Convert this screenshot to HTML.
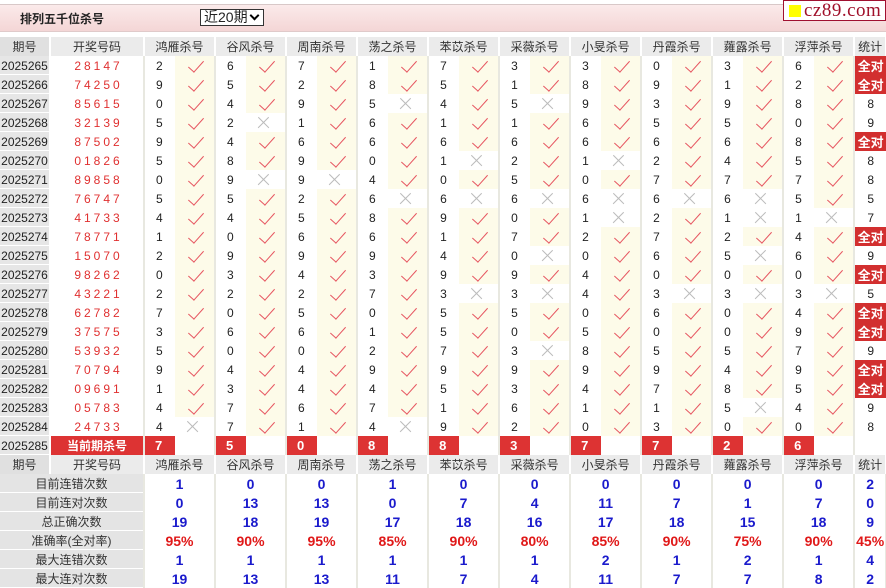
<!DOCTYPE html>
<html><head><meta charset="utf-8"><style>
*{margin:0;padding:0;box-sizing:border-box}
body{width:886px;height:586px;overflow:hidden;background:#fff;font-family:"Liberation Sans","Noto Sans CJK SC",sans-serif;font-size:12px;color:#222;position:relative}
.band{position:absolute;left:0;top:4px;width:886px;height:28px;background:linear-gradient(#fbeaea,#f4d6d6);border-top:1px solid #d8c8c8;border-bottom:1px solid #e0caca}
.title{position:absolute;left:20px;top:10px;font-weight:bold;font-size:12px;color:#222}
.sel{position:absolute;left:200px;top:9px;width:64px;height:17px;border:1px solid #333;background:#fff;font-size:14px;line-height:15px;padding-left:3px}
.sel b{position:absolute;right:5px;top:2px;width:7px;height:7px;border-right:2.5px solid #000;border-bottom:2.5px solid #000;transform:rotate(45deg)}
.logo{position:absolute;left:783px;top:0;width:103px;height:21px;border:1px solid #a01030;background:#fff;font-family:"Liberation Serif",serif;font-size:19px;line-height:19px;color:#a0102a;padding-left:20px;letter-spacing:0.5px}
.logo i{position:absolute;left:5px;top:4px;width:12px;height:12px;background:#ff0}
table{position:absolute;left:0;top:37px;border-collapse:collapse;table-layout:fixed;width:886px}
td{height:19px;padding:0;white-space:nowrap;overflow:hidden}
td.p{background:linear-gradient(#e6e6e6 18px,#fff 18px);text-align:center;border-right:2px solid #fff}
td.k{color:#e03030;letter-spacing:3px;text-align:center;padding-left:3px;border-right:2px solid #e8e8e0}
td.n{padding-left:11px}
td.y,td.w{border-right:2px solid #e8e8e0;position:relative}
td.y{background:#fdfbe9}
td.y:after{content:"";position:absolute;left:17px;top:1px;width:7px;height:14px;border-right:1.6px solid #e65560;border-bottom:1.6px solid #e65560;transform:rotate(42deg)}
td.w:before,td.w:after{content:"";position:absolute;left:10px;top:9px;width:15px;height:1.3px;background:#bbb;transform:rotate(45deg)}
td.w:after{transform:rotate(-45deg)}
td.s{text-align:center}
td.q{text-align:center;background:#d22f2f;color:#fff;font-weight:bold;font-size:13px}
tr.h td{background:#ebebeb;text-align:center;color:#333;border-right:2px solid #fff}
tr.h td.p{background:#e0e0e0}
tr.x td.r{background:#d33;color:#fff;font-weight:bold;font-size:13px;padding-left:10px}
tr.x td.kk{background:#d33;color:#fff;font-weight:bold;text-align:center;border-right:2px solid #e8e8e0}
tr.x td.e{border-right:2px solid #e8e8e0}
tr.t td{text-align:center;font-weight:bold;font-size:14px;color:#1a1acc;border-right:2px solid #e8e8e0}
tr.t td.L{background:linear-gradient(#e4e4e4 18px,#fff 18px);font-weight:normal;font-size:12px;color:#333}
tr.t.pc td{color:#e01818}
tr.t.pc td.L{color:#333}
</style></head><body>
<div class="band"></div>
<div class="title">排列五千位杀号</div>
<div class="sel">近20期<b></b></div>
<div class="logo"><i></i>cz89.com</div>
<table>
<colgroup><col style="width:50px"><col style="width:94px">
<col style="width:31px"><col style="width:40px"><col style="width:31px"><col style="width:40px"><col style="width:31px"><col style="width:40px"><col style="width:31px"><col style="width:40px"><col style="width:31px"><col style="width:40px"><col style="width:31px"><col style="width:40px"><col style="width:31px"><col style="width:40px"><col style="width:31px"><col style="width:40px"><col style="width:31px"><col style="width:40px"><col style="width:31px"><col style="width:40px"><col style="width:32px"></colgroup>
<tr class="h"><td class="p">期号</td><td>开奖号码</td><td colspan="2">鸿雁杀号</td><td colspan="2">谷风杀号</td><td colspan="2">周南杀号</td><td colspan="2">荡之杀号</td><td colspan="2">苯苡杀号</td><td colspan="2">采薇杀号</td><td colspan="2">小旻杀号</td><td colspan="2">丹霞杀号</td><td colspan="2">蕹露杀号</td><td colspan="2">浮萍杀号</td><td>统计</td></tr>
<tr><td class="p">2025265</td><td class="k">28147</td><td class="n">2</td><td class="y"></td><td class="n">6</td><td class="y"></td><td class="n">7</td><td class="y"></td><td class="n">1</td><td class="y"></td><td class="n">7</td><td class="y"></td><td class="n">3</td><td class="y"></td><td class="n">3</td><td class="y"></td><td class="n">0</td><td class="y"></td><td class="n">3</td><td class="y"></td><td class="n">6</td><td class="y"></td><td class="q">全对</td></tr>
<tr><td class="p">2025266</td><td class="k">74250</td><td class="n">9</td><td class="y"></td><td class="n">5</td><td class="y"></td><td class="n">2</td><td class="y"></td><td class="n">8</td><td class="y"></td><td class="n">5</td><td class="y"></td><td class="n">1</td><td class="y"></td><td class="n">8</td><td class="y"></td><td class="n">9</td><td class="y"></td><td class="n">1</td><td class="y"></td><td class="n">2</td><td class="y"></td><td class="q">全对</td></tr>
<tr><td class="p">2025267</td><td class="k">85615</td><td class="n">0</td><td class="y"></td><td class="n">4</td><td class="y"></td><td class="n">9</td><td class="y"></td><td class="n">5</td><td class="w"></td><td class="n">4</td><td class="y"></td><td class="n">5</td><td class="w"></td><td class="n">9</td><td class="y"></td><td class="n">3</td><td class="y"></td><td class="n">9</td><td class="y"></td><td class="n">8</td><td class="y"></td><td class="s">8</td></tr>
<tr><td class="p">2025268</td><td class="k">32139</td><td class="n">5</td><td class="y"></td><td class="n">2</td><td class="w"></td><td class="n">1</td><td class="y"></td><td class="n">6</td><td class="y"></td><td class="n">1</td><td class="y"></td><td class="n">1</td><td class="y"></td><td class="n">6</td><td class="y"></td><td class="n">5</td><td class="y"></td><td class="n">5</td><td class="y"></td><td class="n">0</td><td class="y"></td><td class="s">9</td></tr>
<tr><td class="p">2025269</td><td class="k">87502</td><td class="n">9</td><td class="y"></td><td class="n">4</td><td class="y"></td><td class="n">6</td><td class="y"></td><td class="n">6</td><td class="y"></td><td class="n">6</td><td class="y"></td><td class="n">6</td><td class="y"></td><td class="n">6</td><td class="y"></td><td class="n">6</td><td class="y"></td><td class="n">6</td><td class="y"></td><td class="n">8</td><td class="y"></td><td class="q">全对</td></tr>
<tr><td class="p">2025270</td><td class="k">01826</td><td class="n">5</td><td class="y"></td><td class="n">8</td><td class="y"></td><td class="n">9</td><td class="y"></td><td class="n">0</td><td class="y"></td><td class="n">1</td><td class="w"></td><td class="n">2</td><td class="y"></td><td class="n">1</td><td class="w"></td><td class="n">2</td><td class="y"></td><td class="n">4</td><td class="y"></td><td class="n">5</td><td class="y"></td><td class="s">8</td></tr>
<tr><td class="p">2025271</td><td class="k">89858</td><td class="n">0</td><td class="y"></td><td class="n">9</td><td class="w"></td><td class="n">9</td><td class="w"></td><td class="n">4</td><td class="y"></td><td class="n">0</td><td class="y"></td><td class="n">5</td><td class="y"></td><td class="n">0</td><td class="y"></td><td class="n">7</td><td class="y"></td><td class="n">7</td><td class="y"></td><td class="n">7</td><td class="y"></td><td class="s">8</td></tr>
<tr><td class="p">2025272</td><td class="k">76747</td><td class="n">5</td><td class="y"></td><td class="n">5</td><td class="y"></td><td class="n">2</td><td class="y"></td><td class="n">6</td><td class="w"></td><td class="n">6</td><td class="w"></td><td class="n">6</td><td class="w"></td><td class="n">6</td><td class="w"></td><td class="n">6</td><td class="w"></td><td class="n">6</td><td class="w"></td><td class="n">5</td><td class="y"></td><td class="s">5</td></tr>
<tr><td class="p">2025273</td><td class="k">41733</td><td class="n">4</td><td class="y"></td><td class="n">4</td><td class="y"></td><td class="n">5</td><td class="y"></td><td class="n">8</td><td class="y"></td><td class="n">9</td><td class="y"></td><td class="n">0</td><td class="y"></td><td class="n">1</td><td class="w"></td><td class="n">2</td><td class="y"></td><td class="n">1</td><td class="w"></td><td class="n">1</td><td class="w"></td><td class="s">7</td></tr>
<tr><td class="p">2025274</td><td class="k">78771</td><td class="n">1</td><td class="y"></td><td class="n">0</td><td class="y"></td><td class="n">6</td><td class="y"></td><td class="n">6</td><td class="y"></td><td class="n">1</td><td class="y"></td><td class="n">7</td><td class="y"></td><td class="n">2</td><td class="y"></td><td class="n">7</td><td class="y"></td><td class="n">2</td><td class="y"></td><td class="n">4</td><td class="y"></td><td class="q">全对</td></tr>
<tr><td class="p">2025275</td><td class="k">15070</td><td class="n">2</td><td class="y"></td><td class="n">9</td><td class="y"></td><td class="n">9</td><td class="y"></td><td class="n">9</td><td class="y"></td><td class="n">4</td><td class="y"></td><td class="n">0</td><td class="w"></td><td class="n">0</td><td class="y"></td><td class="n">6</td><td class="y"></td><td class="n">5</td><td class="w"></td><td class="n">6</td><td class="y"></td><td class="s">9</td></tr>
<tr><td class="p">2025276</td><td class="k">98262</td><td class="n">0</td><td class="y"></td><td class="n">3</td><td class="y"></td><td class="n">4</td><td class="y"></td><td class="n">3</td><td class="y"></td><td class="n">9</td><td class="y"></td><td class="n">9</td><td class="y"></td><td class="n">4</td><td class="y"></td><td class="n">0</td><td class="y"></td><td class="n">0</td><td class="y"></td><td class="n">0</td><td class="y"></td><td class="q">全对</td></tr>
<tr><td class="p">2025277</td><td class="k">43221</td><td class="n">2</td><td class="y"></td><td class="n">2</td><td class="y"></td><td class="n">2</td><td class="y"></td><td class="n">7</td><td class="y"></td><td class="n">3</td><td class="w"></td><td class="n">3</td><td class="w"></td><td class="n">4</td><td class="y"></td><td class="n">3</td><td class="w"></td><td class="n">3</td><td class="w"></td><td class="n">3</td><td class="w"></td><td class="s">5</td></tr>
<tr><td class="p">2025278</td><td class="k">62782</td><td class="n">7</td><td class="y"></td><td class="n">0</td><td class="y"></td><td class="n">5</td><td class="y"></td><td class="n">0</td><td class="y"></td><td class="n">5</td><td class="y"></td><td class="n">5</td><td class="y"></td><td class="n">0</td><td class="y"></td><td class="n">6</td><td class="y"></td><td class="n">0</td><td class="y"></td><td class="n">4</td><td class="y"></td><td class="q">全对</td></tr>
<tr><td class="p">2025279</td><td class="k">37575</td><td class="n">3</td><td class="y"></td><td class="n">6</td><td class="y"></td><td class="n">6</td><td class="y"></td><td class="n">1</td><td class="y"></td><td class="n">5</td><td class="y"></td><td class="n">0</td><td class="y"></td><td class="n">5</td><td class="y"></td><td class="n">0</td><td class="y"></td><td class="n">0</td><td class="y"></td><td class="n">9</td><td class="y"></td><td class="q">全对</td></tr>
<tr><td class="p">2025280</td><td class="k">53932</td><td class="n">5</td><td class="y"></td><td class="n">0</td><td class="y"></td><td class="n">0</td><td class="y"></td><td class="n">2</td><td class="y"></td><td class="n">7</td><td class="y"></td><td class="n">3</td><td class="w"></td><td class="n">8</td><td class="y"></td><td class="n">5</td><td class="y"></td><td class="n">5</td><td class="y"></td><td class="n">7</td><td class="y"></td><td class="s">9</td></tr>
<tr><td class="p">2025281</td><td class="k">70794</td><td class="n">9</td><td class="y"></td><td class="n">4</td><td class="y"></td><td class="n">4</td><td class="y"></td><td class="n">9</td><td class="y"></td><td class="n">9</td><td class="y"></td><td class="n">9</td><td class="y"></td><td class="n">9</td><td class="y"></td><td class="n">9</td><td class="y"></td><td class="n">4</td><td class="y"></td><td class="n">9</td><td class="y"></td><td class="q">全对</td></tr>
<tr><td class="p">2025282</td><td class="k">09691</td><td class="n">1</td><td class="y"></td><td class="n">3</td><td class="y"></td><td class="n">4</td><td class="y"></td><td class="n">4</td><td class="y"></td><td class="n">5</td><td class="y"></td><td class="n">3</td><td class="y"></td><td class="n">4</td><td class="y"></td><td class="n">7</td><td class="y"></td><td class="n">8</td><td class="y"></td><td class="n">5</td><td class="y"></td><td class="q">全对</td></tr>
<tr><td class="p">2025283</td><td class="k">05783</td><td class="n">4</td><td class="y"></td><td class="n">7</td><td class="y"></td><td class="n">6</td><td class="y"></td><td class="n">7</td><td class="y"></td><td class="n">1</td><td class="y"></td><td class="n">6</td><td class="y"></td><td class="n">1</td><td class="y"></td><td class="n">1</td><td class="y"></td><td class="n">5</td><td class="w"></td><td class="n">4</td><td class="y"></td><td class="s">9</td></tr>
<tr><td class="p">2025284</td><td class="k">24733</td><td class="n">4</td><td class="w"></td><td class="n">7</td><td class="y"></td><td class="n">1</td><td class="y"></td><td class="n">4</td><td class="w"></td><td class="n">9</td><td class="y"></td><td class="n">2</td><td class="y"></td><td class="n">0</td><td class="y"></td><td class="n">3</td><td class="y"></td><td class="n">0</td><td class="y"></td><td class="n">0</td><td class="y"></td><td class="s">8</td></tr>
<tr class="x"><td class="p">2025285</td><td class="kk">当前期杀号</td><td class="r">7</td><td class="e"></td><td class="r">5</td><td class="e"></td><td class="r">0</td><td class="e"></td><td class="r">8</td><td class="e"></td><td class="r">8</td><td class="e"></td><td class="r">3</td><td class="e"></td><td class="r">7</td><td class="e"></td><td class="r">7</td><td class="e"></td><td class="r">2</td><td class="e"></td><td class="r">6</td><td class="e"></td><td></td></tr>
<tr class="h"><td class="p">期号</td><td>开奖号码</td><td colspan="2">鸿雁杀号</td><td colspan="2">谷风杀号</td><td colspan="2">周南杀号</td><td colspan="2">荡之杀号</td><td colspan="2">苯苡杀号</td><td colspan="2">采薇杀号</td><td colspan="2">小旻杀号</td><td colspan="2">丹霞杀号</td><td colspan="2">蕹露杀号</td><td colspan="2">浮萍杀号</td><td>统计</td></tr>
<tr class="t"><td class="L" colspan="2">目前连错次数</td><td colspan="2">1</td><td colspan="2">0</td><td colspan="2">0</td><td colspan="2">1</td><td colspan="2">0</td><td colspan="2">0</td><td colspan="2">0</td><td colspan="2">0</td><td colspan="2">0</td><td colspan="2">0</td><td>2</td></tr>
<tr class="t"><td class="L" colspan="2">目前连对次数</td><td colspan="2">0</td><td colspan="2">13</td><td colspan="2">13</td><td colspan="2">0</td><td colspan="2">7</td><td colspan="2">4</td><td colspan="2">11</td><td colspan="2">7</td><td colspan="2">1</td><td colspan="2">7</td><td>0</td></tr>
<tr class="t"><td class="L" colspan="2">总正确次数</td><td colspan="2">19</td><td colspan="2">18</td><td colspan="2">19</td><td colspan="2">17</td><td colspan="2">18</td><td colspan="2">16</td><td colspan="2">17</td><td colspan="2">18</td><td colspan="2">15</td><td colspan="2">18</td><td>9</td></tr>
<tr class="t pc"><td class="L" colspan="2">准确率(全对率)</td><td colspan="2">95%</td><td colspan="2">90%</td><td colspan="2">95%</td><td colspan="2">85%</td><td colspan="2">90%</td><td colspan="2">80%</td><td colspan="2">85%</td><td colspan="2">90%</td><td colspan="2">75%</td><td colspan="2">90%</td><td>45%</td></tr>
<tr class="t"><td class="L" colspan="2">最大连错次数</td><td colspan="2">1</td><td colspan="2">1</td><td colspan="2">1</td><td colspan="2">1</td><td colspan="2">1</td><td colspan="2">1</td><td colspan="2">2</td><td colspan="2">1</td><td colspan="2">2</td><td colspan="2">1</td><td>4</td></tr>
<tr class="t"><td class="L" colspan="2">最大连对次数</td><td colspan="2">19</td><td colspan="2">13</td><td colspan="2">13</td><td colspan="2">11</td><td colspan="2">7</td><td colspan="2">4</td><td colspan="2">11</td><td colspan="2">7</td><td colspan="2">7</td><td colspan="2">8</td><td>2</td></tr>
</table>
</body></html>
